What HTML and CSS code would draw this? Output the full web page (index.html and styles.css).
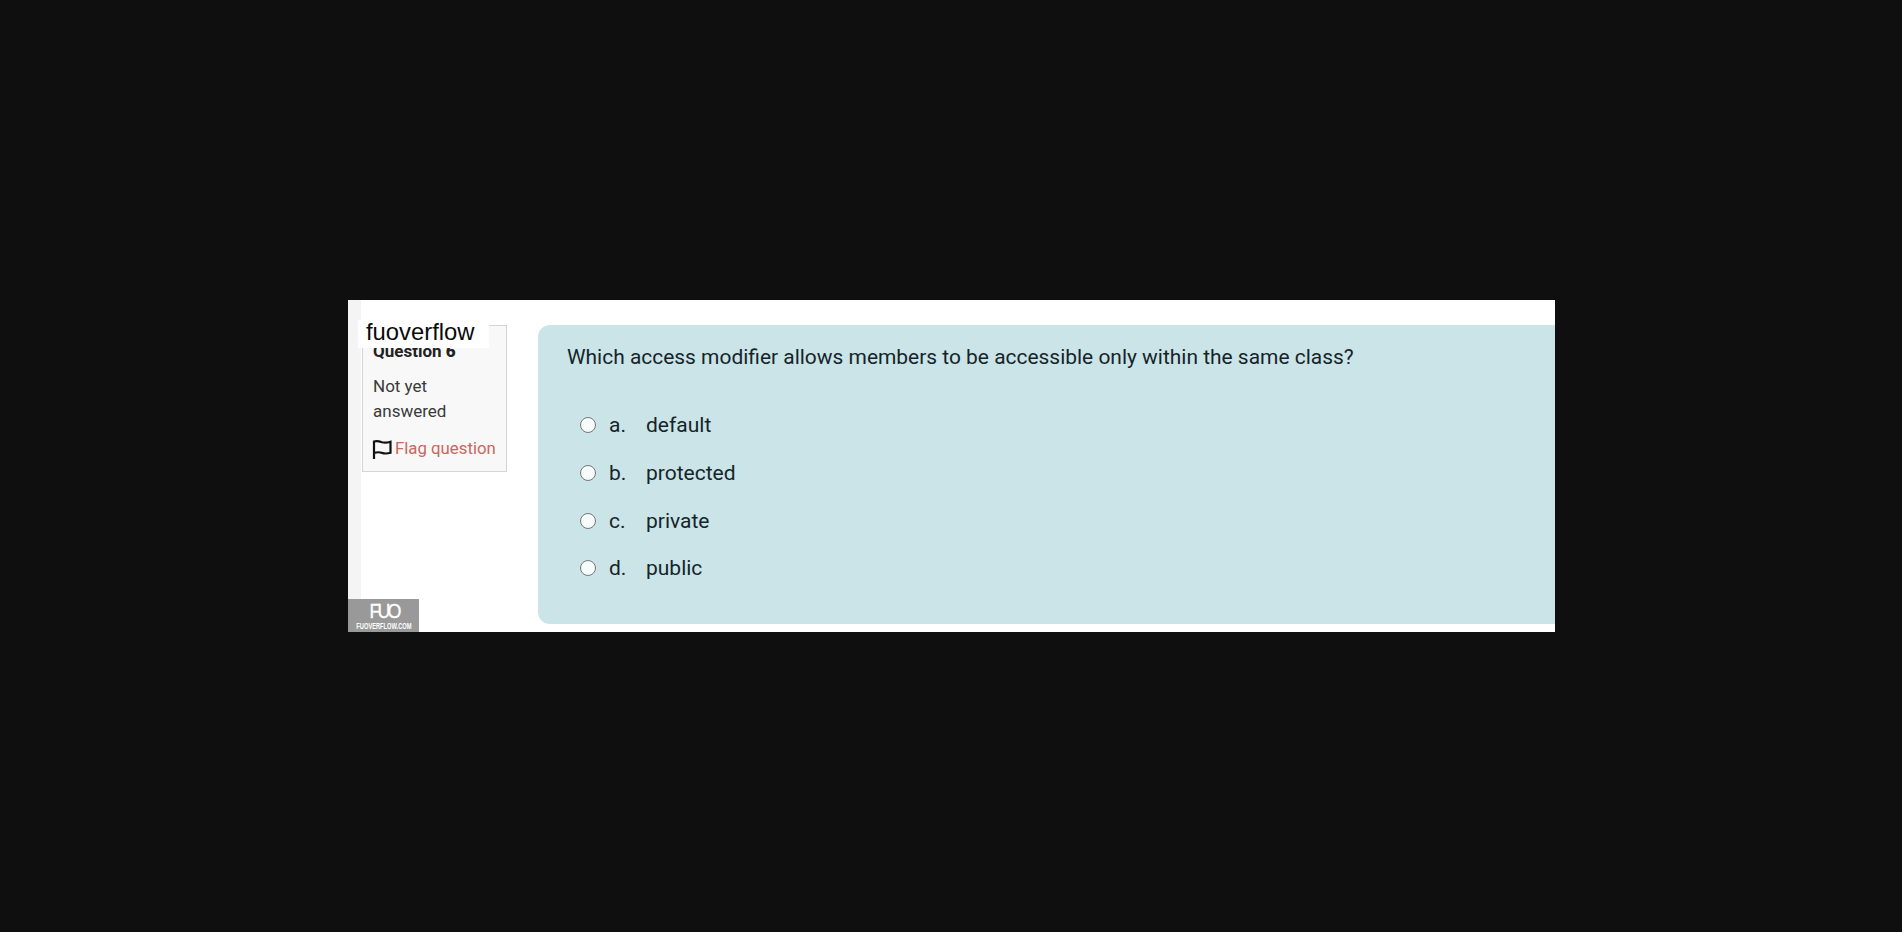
FILE: index.html
```html
<!DOCTYPE html>
<html>
   <head>
      <meta http-equiv="Content-Type" content="text/html;charset=utf-8" />
      <title>fuoverflow</title>
      <link rel="stylesheet" href="styles.css">
   </head>
   <body>
      <main class="shot">
         <div class="watermark">fuoverflow</div>
         <aside class="info">
            <h3 class="qno">Question <b>6</b></h3>
            <p class="state">Not yet answered</p>
            <div class="flag">
               <svg class="flag-icon" width="20" height="20" viewBox="0 0 20 20">
                  <path d="M2 20V2.500C5 1.500 7.500 2.300 10 3.200C12.500 4 15 3.800 18.500 2.700V13.800C15 14.800 12.500 14.700 10 13.900C7.500 13 5 13 2 14" fill="none" stroke="#111" stroke-width="2.200"/>
               </svg>
               <span>Flag question</span>
            </div>
         </aside>
         <section class="question">
            <p class="qtext">Which access modifier allows members to be accessible only within the same class?</p>
            <div class="answers">
               <div class="answer"><span class="radio"></span><span class="letter">a.</span><span>default</span></div>
               <div class="answer"><span class="radio"></span><span class="letter">b.</span><span>protected</span></div>
               <div class="answer"><span class="radio"></span><span class="letter">c.</span><span>private</span></div>
               <div class="answer"><span class="radio"></span><span class="letter">d.</span><span>public</span></div>
            </div>
         </section>
         <div class="logo">
            <span class="logo-mark">FUO</span>
            <span class="logo-site">FUOVERFLOW.COM</span>
         </div>
      </main>
   </body>
</html>
```

FILE: styles.css
```css
html, body {
   height: 100%;
}

body {
   margin: 0;
   background: #0f0f0f;
   font-family: Roboto, "Liberation Sans", sans-serif;
   padding: 300px 0 0 348px;
   box-sizing: border-box;
   overflow: hidden;
}

.shot {
   position: relative;
   display: flex;
   align-items: flex-start;
   width: 1207px;
   height: 332px;
   padding: 25px 0 0 14px;
   box-sizing: border-box;
   overflow: hidden;
   background: linear-gradient(to right, #f4f4f4 13px, #fff 13px);
}

.watermark {
   position: absolute;
   left: 10px;
   top: 20px;
   width: 131px;
   height: 28px;
   padding-left: 8px;
   box-sizing: border-box;
   background: #fff;
   color: #0a0a0a;
   font-family: "Liberation Sans", sans-serif;
   font-size: 23.800px;
   line-height: 24px;
}

.info {
   flex: none;
   width: 145px;
   height: 147px;
   padding: 15px 9px 0 10px;
   box-sizing: border-box;
   background: #f8f8f8;
   border: 1px solid #d4d4d4;
   color: #3a3a3a;
}

.qno {
   margin: 0;
   font-size: 17px;
   line-height: 20px;
   font-weight: 700;
   color: #222;
}

.state {
   margin: 13px 0 0;
   font-size: 17px;
   line-height: 25px;
}

.flag {
   display: flex;
   align-items: center;
   gap: 3px;
   margin-top: 12px;
   margin-left: -1px;
   font-size: 16.800px;
   line-height: 25px;
   white-space: nowrap;
   color: #c9675c;
}

.flag-icon {
   flex: none;
}

.question {
   flex: none;
   width: 1040px;
   height: 299px;
   margin-left: 31px;
   padding: 17px 0 0 29px;
   box-sizing: border-box;
   background: #cbe4e7;
   border-radius: 12px 0 0 12px;
   color: #15242a;
}

.qtext {
   margin: 0;
   font-size: 20.950px;
   line-height: 30px;
}

.answers {
   margin-top: 29.400px;
   padding-left: 13px;
}

.answer {
   display: flex;
   align-items: center;
   height: 47.700px;
   font-size: 21px;
}

.radio {
   flex: none;
   width: 16px;
   height: 16px;
   margin-right: 13px;
   box-sizing: border-box;
   background: #f6fbfc;
   border: 1.500px solid #777;
   border-radius: 50%;
}

.letter {
   flex: none;
   width: 37px;
}

.logo {
   position: absolute;
   left: 0;
   bottom: 0;
   display: flex;
   flex-direction: column;
   align-items: center;
   width: 71px;
   height: 33px;
   background: #999;
   color: #fff;
}

.logo-mark {
   margin-top: 2px;
   font-family: "Liberation Sans", sans-serif;
   font-size: 21px;
   line-height: 20px;
   letter-spacing: -3.500px;
   transform: scaleX(.85);
   -webkit-text-stroke: .4px #fff;
}

.logo-site {
   font-family: "Liberation Sans", sans-serif;
   font-size: 9.500px;
   line-height: 10px;
   font-weight: 700;
   transform: scaleX(.6);
   white-space: nowrap;
}
```
